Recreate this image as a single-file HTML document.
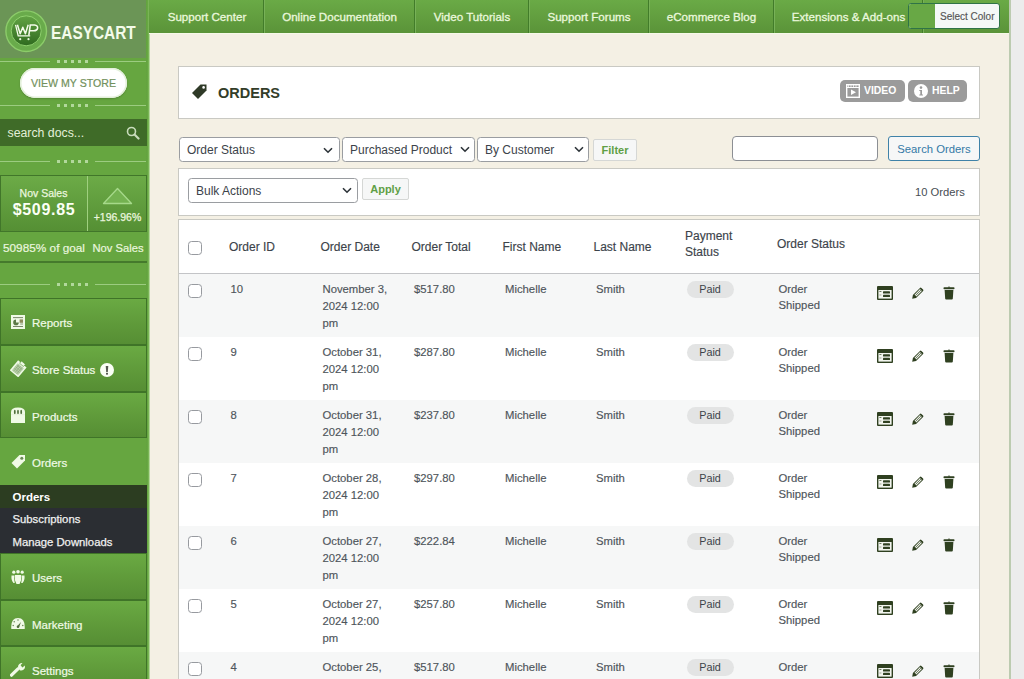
<!DOCTYPE html>
<html><head><meta charset="utf-8">
<style>
*{box-sizing:border-box;margin:0;padding:0}
html,body{width:1024px;height:679px;overflow:hidden}
body{position:relative;background:#f4f0e4;font-family:"Liberation Sans",sans-serif;color:#2c3338}
.a{position:absolute;white-space:nowrap}
/* sidebar */
#sb{position:absolute;left:0;top:0;width:146px;height:679px;background:#66a640}
#sbedge{position:absolute;left:146px;top:0;width:4px;height:679px;background:linear-gradient(90deg,#62a23e,#68a843 45%,#86be63 75%,#e2f3d3)}
#logo{position:absolute;left:0;top:0;width:146px;height:58px;background:#6b9556}
.div{position:absolute;left:0;width:146px;height:8px}
.div .l{position:absolute;top:3px;height:1.2px;background:#9ccc80}
.div .d{position:absolute;top:2px;width:3.2px;height:3.2px;background:#b2d89c}
.menu{position:absolute;left:0;width:147px;height:47px;background:linear-gradient(#6aaa43,#5f9a3a 55%,#568e34);border:1px solid #3f7428}
.menu .t{position:absolute;left:31px;top:2px;font-size:11.5px;color:#f0fae6;-webkit-text-stroke:0.2px #f0fae6}
.menu svg{position:absolute}
/* top bar */
#top{position:absolute;left:149px;top:0;width:861px;height:34px;background:linear-gradient(#6aaa46,#5b9439 97%);border-bottom:1px solid #f6f9e8}
.nav{position:absolute;top:0;height:33px;line-height:34px;font-size:11.6px;color:#eaf8dc;-webkit-text-stroke:.3px #eaf8dc;text-align:center}
.sep{position:absolute;top:0;width:2px;height:33px;background:linear-gradient(90deg,#427c2a 50%,#78b158 50%)}
#rstrip{position:absolute;left:1011px;top:0;width:13px;height:679px;background:#ececec}
#rline{position:absolute;left:1009px;top:0;width:2px;height:679px;background:#bccbb0}
.box{position:absolute;background:#fff;border:1px solid #c9c9c3}
.sel{position:absolute;height:25px;background:#fff;border:1px solid #9a9da1;border-radius:3.5px;font-size:12px;line-height:25px;padding-left:7px;color:#3c434a}
.sel svg{position:absolute;top:8px}
.btn{position:absolute;background:#f6f7f7;border:1px solid #d5d7d5;border-radius:2px;font-size:11px;font-weight:bold;color:#5f9f45;text-align:center}
.th{position:absolute;font-size:12px;color:#3c434a;line-height:16px;-webkit-text-stroke:.15px #3c434a}
.row{position:absolute;left:179px;width:800px;height:63px}
.td{position:absolute;font-size:11.3px;color:#4e555b;line-height:16.7px;-webkit-text-stroke:.15px #4e555b}
.cb{position:absolute;width:14px;height:14px;border:1px solid #979a9f;border-radius:3.5px;background:#fff}
.pill{position:absolute;width:47px;height:17px;border-radius:9px;background:#e3e4e4;font-size:10.8px;line-height:17px;text-align:center;color:#3c434a}
</style></head><body>
<div id="sb"></div>
<div id="sbedge"></div>
<div id="logo"></div>
<!-- logo -->
<svg class="a" style="left:4px;top:9px" width="46" height="46" viewBox="0 0 46 46">
  <defs><linearGradient id="lg1" x1="0" y1="0" x2="0" y2="1"><stop offset="0" stop-color="#62a344"/><stop offset="1" stop-color="#2f6a1f"/></linearGradient></defs>
  <circle cx="22.2" cy="22.2" r="20.3" fill="#69ab4b" stroke="#8ccc6a" stroke-width="1.4"/>
  <circle cx="22.2" cy="21.8" r="15" fill="url(#lg1)" stroke="#8fd06e" stroke-width="1"/>
  <path d="M11.6 15.8 L14.2 26.8 L26.2 26.8" stroke="#f4fbea" stroke-width="1.3" fill="none"/>
  <path d="M13.4 15.8 L16.2 24.8 L18.8 18.2 L21.4 24.8 L24.2 15.8" stroke="#f4fbea" stroke-width="1.5" fill="none" stroke-linejoin="round"/>
  <path d="M24.8 26.5 L26.3 16 L30.5 16 Q34 16.5 33.6 19 Q33.2 21.8 29.5 21.8 L25.8 21.8" stroke="#f4fbea" stroke-width="1.6" fill="none"/>
  <circle cx="16.2" cy="30.2" r="1.1" fill="#e8f5dc"/><circle cx="24.5" cy="30.2" r="1.1" fill="#e8f5dc"/>
</svg>
<div class="a" style="left:50.5px;top:22.5px;font-size:17.5px;font-weight:bold;color:#f4fbea;line-height:20px;transform:scaleX(0.88);transform-origin:0 0">EASYCART</div>

<div class="div" style="top:58px"><div class="l" style="left:0;width:50px"></div><div class="l" style="left:95px;width:51px"></div><div class="d" style="left:57px"></div><div class="d" style="left:64px"></div><div class="d" style="left:71px"></div><div class="d" style="left:78px"></div><div class="d" style="left:85px"></div></div>
<div class="div" style="top:102px"><div class="l" style="left:0;width:50px"></div><div class="l" style="left:95px;width:51px"></div><div class="d" style="left:57px"></div><div class="d" style="left:64px"></div><div class="d" style="left:71px"></div><div class="d" style="left:78px"></div><div class="d" style="left:85px"></div></div>
<div class="div" style="top:158px"><div class="l" style="left:0;width:50px"></div><div class="l" style="left:95px;width:51px"></div><div class="d" style="left:57px"></div><div class="d" style="left:64px"></div><div class="d" style="left:71px"></div><div class="d" style="left:78px"></div><div class="d" style="left:85px"></div></div>
<div class="div" style="top:281px"><div class="l" style="left:0;width:50px"></div><div class="l" style="left:95px;width:51px"></div><div class="d" style="left:57px"></div><div class="d" style="left:64px"></div><div class="d" style="left:71px"></div><div class="d" style="left:78px"></div><div class="d" style="left:85px"></div></div>
<div class="a" style="left:20px;top:68px;width:107px;height:30px;border-radius:15px;background:#fff;box-shadow:0 1px 2px rgba(0,0,0,.2), inset 0 0 0 1.5px #e3f0da;font-size:10.6px;line-height:31px;text-align:center;color:#72915c;-webkit-text-stroke:.2px #72915c">VIEW MY STORE</div>
<div class="a" style="left:0;top:119px;width:147px;height:27px;background:#3f6b28"></div>
<div class="a" style="left:7.5px;top:120px;line-height:27px;font-size:12.3px;color:#e3efd8">search docs...</div>
<svg class="a" style="left:126px;top:126px" width="14" height="14" viewBox="0 0 14 14"><circle cx="5.5" cy="5.5" r="4" stroke="#c9dcbc" stroke-width="1.6" fill="none"/><path d="M8.5 8.5 L12.5 12.5" stroke="#c9dcbc" stroke-width="2.2" stroke-linecap="round"/></svg>
<!-- sales box -->
<div class="a" style="left:0;top:175px;width:147px;height:57px;background:linear-gradient(#6cab47,#558f34);border:1px solid #41762a"></div>
<div class="a" style="left:87px;top:176px;width:1px;height:55px;background:#9fd07f"></div>
<div class="a" style="left:0;top:186px;width:87px;text-align:center;font-size:10.5px;line-height:14px;color:#eaf6df;-webkit-text-stroke:.25px #eaf6df">Nov Sales</div>
<div class="a" style="left:0.5px;top:200px;width:87px;text-align:center;font-size:16px;font-weight:bold;line-height:20px;letter-spacing:0.7px;color:#fbfff5">$509.85</div>
<svg class="a" style="left:102px;top:187px" width="31" height="18" viewBox="0 0 31 18"><path d="M15.5 1.5 L29.5 16.5 L1.5 16.5 Z" fill="#74b251" stroke="#a6d98a" stroke-width="1.3" stroke-linejoin="round"/></svg>
<div class="a" style="left:88px;top:210px;width:59px;text-align:center;font-size:10.5px;line-height:14px;color:#eaf6df;-webkit-text-stroke:.25px #eaf6df">+196.96%</div>
<div class="a" style="left:3px;top:240.5px;font-size:11.8px;line-height:14px;color:#eaf6df;-webkit-text-stroke:.2px #eaf6df">50985% of goal</div>
<div class="a" style="left:92.5px;top:240.5px;font-size:11.2px;line-height:14px;color:#eaf6df;-webkit-text-stroke:.2px #eaf6df">Nov Sales</div>
<div class="a" style="left:0;top:261px;width:147px;height:2px;background:#457a2c"></div>

<div class="menu" style="top:298px;height:47px"><div class="t" style="line-height:45px">Reports</div></div>
<svg class="a" style="left:11px;top:315px" width="14" height="14" viewBox="0 0 14 14"><rect x="0" y="0" width="14" height="14" fill="#f0fae6"/><rect x="2" y="2.2" width="10" height=".9" fill="#6b7a5a"/><path d="M5 7.4 L5 4.6 A2.8 2.8 0 1 0 7.8 7.4 Z" fill="#5b7a45"/><rect x="8.6" y="4.4" width="3.4" height="3.4" fill="#8d8a5a"/><rect x="9.2" y="8.6" width="2.8" height=".8" fill="#6b7a5a"/><rect x="2" y="11" width="10" height=".9" fill="#6b7a5a"/></svg>
<div class="menu" style="top:345px;height:47px"><div class="t" style="line-height:45px">Store Status</div></div>
<svg class="a" style="left:10px;top:360px" width="17" height="17" viewBox="0 0 17 17"><g transform="rotate(40 8.5 8.5)"><rect x="3" y="2.5" width="11" height="13" fill="#f0fae6"/><rect x="4.5" y="5" width="8" height="9" fill="#b8cfa8"/><path d="M5 7h7M5 9h7M5 11h7M6.5 5v9M8.5 5v9M10.5 5v9" stroke="#8aa878" stroke-width=".6"/><rect x="6" y="0.8" width="5" height="3" fill="#f0fae6" stroke="#5a9538" stroke-width=".6"/></g></svg>
<svg class="a" style="left:100px;top:363px" width="14" height="14" viewBox="0 0 14 14"><circle cx="7" cy="7" r="7" fill="#fafff5"/><path d="M5.7 3 H8.3 L7.8 9 H6.2 Z" fill="#55594f"/><rect x="6" y="9.8" width="2" height="1.8" fill="#55594f"/></svg>
<div class="menu" style="top:392px;height:46px"><div class="t" style="line-height:44px">Products</div></div>
<svg class="a" style="left:11px;top:407px" width="14" height="16" viewBox="0 0 14 16"><path d="M0 16 V5 Q0 0.5 7 0.5 Q14 0.5 14 5 V16 Z" fill="#f0fae6"/><ellipse cx="3.8" cy="5" rx=".9" ry="2.2" fill="#4f6e3a"/><ellipse cx="7" cy="5" rx=".9" ry="2.2" fill="#4f6e3a"/><ellipse cx="10.2" cy="5" rx=".9" ry="2.2" fill="#4f6e3a"/><rect x="0" y="7.5" width="14" height=".6" fill="#dfead5"/></svg>
<div class="a" style="left:32px;top:455px;line-height:16px;font-size:11.5px;color:#f0fae6;-webkit-text-stroke:.2px #f0fae6">Orders</div>
<svg class="a" style="left:10px;top:454px" width="16" height="16" viewBox="0 0 16 16"><path d="M9.5 1 H15 V6.5 L7 14.5 L1.5 9 Z" fill="#f0fae6"/><circle cx="11.8" cy="4.2" r="1.5" fill="#6a8a55"/></svg>
<div class="a" style="left:0;top:485px;width:147px;height:68px;background:#2b2e33"></div>
<div class="a" style="left:0;top:485px;width:147px;height:23px;background:#2c3d21"></div>
<div class="a" style="left:12.5px;top:489px;line-height:16px;font-size:11.5px;font-weight:bold;color:#fff">Orders</div>
<div class="a" style="left:12.5px;top:511px;line-height:16px;font-size:11.3px;color:#f0f0f0;-webkit-text-stroke:.25px #f0f0f0">Subscriptions</div>
<div class="a" style="left:12.5px;top:534px;line-height:16px;font-size:11.3px;color:#f0f0f0;-webkit-text-stroke:.25px #f0f0f0">Manage Downloads</div>
<div class="menu" style="top:553px;height:47px"><div class="t" style="line-height:45px">Users</div></div>
<svg class="a" style="left:11px;top:570px" width="14" height="14" viewBox="0 0 14 14"><circle cx="2.8" cy="2.2" r="1.6" fill="#f0fae6"/><circle cx="7" cy="1.8" r="1.8" fill="#f0fae6"/><circle cx="11.2" cy="2.2" r="1.6" fill="#f0fae6"/><path d="M0.5 5.5 Q0 10 2.5 13 L3.8 13 Q2.6 9 3.5 5.5Z M13.5 5.5 Q14 10 11.5 13 L10.2 13 Q11.4 9 10.5 5.5Z" fill="#f0fae6"/><path d="M4 5 H10 Q11 9.5 8.5 14 H5.5 Q3 9.5 4 5Z" fill="#f0fae6"/></svg>
<div class="menu" style="top:600px;height:46px"><div class="t" style="line-height:44px;top:1.5px">Marketing</div></div>
<svg class="a" style="left:11px;top:617px" width="14" height="13" viewBox="0 0 14 13"><path d="M0.3 12 Q-0.5 1 7 1 Q14.5 1 13.7 12 Z" fill="#f0fae6"/><circle cx="7" cy="3" r=".7" fill="#5e7c48"/><circle cx="3.2" cy="4.7" r=".7" fill="#5e7c48"/><circle cx="2.2" cy="8.5" r=".7" fill="#5e7c48"/><circle cx="11.8" cy="8.5" r=".7" fill="#5e7c48"/><path d="M6 9.5 L10 5 L8 10.2 Z" fill="#4e6a3a"/><circle cx="7" cy="9.7" r="1.3" fill="#4e6a3a"/></svg>
<div class="menu" style="top:646px;height:47px"><div class="t" style="line-height:45px">Settings</div></div>
<svg class="a" style="left:10px;top:662px" width="16" height="16" viewBox="0 0 16 16"><path d="M1.5 13.2 L8.2 6.6" stroke="#f0fae6" stroke-width="3.2" stroke-linecap="round"/><path d="M8 5 A4 4 0 0 1 12.5 1 L10.6 3.3 L12.4 5.4 L14.9 3.5 A4 4 0 0 1 9.8 8.3 Z" fill="#f0fae6"/></svg>
<div id="top"></div>
<div class="nav" style="left:150px;width:114px">Support Center</div>
<div class="sep" style="left:263px"></div><div class="nav" style="left:264px;width:151px">Online Documentation</div>
<div class="sep" style="left:414px"></div><div class="nav" style="left:415px;width:114px">Video Tutorials</div>
<div class="sep" style="left:528px"></div><div class="nav" style="left:529px;width:120px">Support Forums</div>
<div class="sep" style="left:648px"></div><div class="nav" style="left:649px;width:125px">eCommerce Blog</div>
<div class="sep" style="left:773px"></div><div class="nav" style="left:774px;width:149px">Extensions &amp; Add-ons</div>
<div class="sep" style="left:922px"></div>
<div class="a" style="left:908px;top:3px;width:92px;height:26px;border:1px solid #2f7447;border-radius:3px;background:#f4f8f7;overflow:hidden"><div style="position:absolute;left:0;top:0;width:26px;height:26px;background:#68a845"></div><div style="position:absolute;left:31px;top:1px;line-height:23px;font-size:10px;color:#555;-webkit-text-stroke:.15px #555">Select Color</div></div>
<div id="rline"></div><div id="rstrip"></div>
<div class="box" style="left:178px;top:66px;width:802px;height:53px"></div>
<svg class="a" style="left:192px;top:84px" width="15" height="15" viewBox="0 0 15 15"><path d="M8.5 0.5 H14.5 V6.5 L6 15 L0 9 Z" fill="#2f3a27"/><circle cx="11.6" cy="3.4" r="1.3" fill="#fff"/></svg>
<div class="a" style="left:218px;top:84px;font-size:14.5px;font-weight:bold;line-height:18px;color:#333d29">ORDERS</div>
<div class="a" style="left:840px;top:80px;width:65px;height:22px;border-radius:5px;background:#9b9b9b"></div>
<svg class="a" style="left:846px;top:84px" width="14" height="14" viewBox="0 0 14 14"><rect x="0.7" y="0.7" width="12.6" height="12.6" fill="none" stroke="#fff" stroke-width="1.4"/><path d="M1 3.5 H13" stroke="#fff" stroke-width="1"/><path d="M2.5 1v2M5 1v2M7.5 1v2M10 1v2" stroke="#fff" stroke-width=".7"/><path d="M5 5.5 L10 8.3 L5 11 Z" fill="#fff"/></svg>
<div class="a" style="left:864px;top:84px;font-size:10.4px;font-weight:bold;line-height:14px;color:#fff">VIDEO</div>
<div class="a" style="left:908px;top:80px;width:59px;height:22px;border-radius:5px;background:#9b9b9b"></div>
<svg class="a" style="left:914px;top:84px" width="14" height="14" viewBox="0 0 14 14"><circle cx="7" cy="7" r="7" fill="#fff"/><circle cx="7" cy="3.6" r="1.3" fill="#9b9b9b"/><path d="M5.3 6 H8 V10.5 H9 V11.6 H5.3 V10.5 H6.3 V7.1 H5.3 Z" fill="#9b9b9b"/></svg>
<div class="a" style="left:932px;top:84px;font-size:10.4px;font-weight:bold;line-height:14px;color:#fff">HELP</div>
<div class="sel" style="left:179px;top:137px;width:161px">Order Status<svg style="position:absolute;left:143px;top:8.5px" width="10" height="7" viewBox="0 0 10 7"><path d="M1 1.2 L5 5.2 L9 1.2" stroke="#2c3338" stroke-width="1.6" fill="none"/></svg></div>
<div class="sel" style="left:342px;top:137px;width:133px">Purchased Product<svg style="position:absolute;left:117px;top:8px" width="10" height="7" viewBox="0 0 10 7"><path d="M1 1.2 L5 5.2 L9 1.2" stroke="#2c3338" stroke-width="1.6" fill="none"/></svg></div>
<div class="sel" style="left:477px;top:137px;width:112px">By Customer<svg style="position:absolute;left:96px;top:8px" width="10" height="7" viewBox="0 0 10 7"><path d="M1 1.2 L5 5.2 L9 1.2" stroke="#2c3338" stroke-width="1.6" fill="none"/></svg></div>
<div class="btn" style="left:593px;top:139px;width:44px;height:22px;line-height:20px">Filter</div>
<div class="a" style="left:732px;top:136px;width:146px;height:25px;border:1px solid #8c8f94;border-radius:4px;background:#fff"></div>
<div class="a" style="left:888px;top:136px;width:92px;height:25px;border:1px solid #3f82a8;border-radius:3px;background:#f6f7f7;font-size:11.3px;line-height:25px;text-align:center;color:#3479a6">Search Orders</div>
<div class="box" style="left:178px;top:168px;width:802px;height:48px"></div>
<div class="sel" style="left:188px;top:177.5px;width:170px">Bulk Actions<svg style="position:absolute;left:153px;top:8px" width="10" height="7" viewBox="0 0 10 7"><path d="M1 1.2 L5 5.2 L9 1.2" stroke="#2c3338" stroke-width="1.6" fill="none"/></svg></div>
<div class="btn" style="left:362px;top:178px;width:47px;height:22px;line-height:20px">Apply</div>
<div class="a" style="left:915px;top:184.5px;font-size:11.2px;line-height:14px;color:#474d53">10 Orders</div>
<div class="box" style="left:178px;top:219px;width:802px;height:470px"></div>
<div class="a" style="left:179px;top:273px;width:800px;height:1px;background:#c3c4c7"></div>
<div class="cb" style="left:188px;top:241px"></div>
<div class="th" style="left:229px;top:239px">Order ID</div>
<div class="th" style="left:320.5px;top:239px">Order Date</div>
<div class="th" style="left:411.5px;top:239px">Order Total</div>
<div class="th" style="left:502.5px;top:239px">First Name</div>
<div class="th" style="left:593.5px;top:239px">Last Name</div>
<div class="th" style="left:685px;top:227.5px">Payment<br>Status</div>
<div class="th" style="left:777px;top:235.5px">Order Status</div>
<div class="row" style="top:273.60px;background:#f6f7f7">
<div class="cb" style="left:9px;top:10px"></div>
<div class="td" style="left:51.5px;top:7.5px">10</div>
<div class="td" style="left:143.5px;top:7.5px">November 3,<br>2024 12:00<br>pm</div>
<div class="td" style="left:235px;top:7.5px">$517.80</div>
<div class="td" style="left:326px;top:7.5px">Michelle</div>
<div class="td" style="left:417px;top:7.5px">Smith</div>
<div class="pill" style="left:507.5px;top:7px">Paid</div>
<div class="td" style="left:599.5px;top:7.5px;line-height:16.3px">Order<br>Shipped</div>
<svg style="position:absolute;left:698px;top:12.5px" width="16" height="14" viewBox="0 0 16 14"><rect x="0" y="0" width="16" height="14" rx="1" fill="#2f4020"/><rect x="1.4" y="4" width="13.2" height="8.6" fill="#f2f5ee"/><rect x="6" y="5.3" width="7" height="2.3" rx=".6" fill="#2f4020"/><rect x="6" y="8.8" width="7" height="2.3" rx=".6" fill="#2f4020"/><rect x="2.4" y="5.2" width="2" height=".8" fill="#4a5a3a"/><rect x="2.4" y="8.6" width="2" height=".8" fill="#8a9480"/></svg>
<svg style="position:absolute;left:732px;top:13px" width="13" height="13" viewBox="0 0 13 13"><g transform="rotate(-45 6.5 6.5)"><path d="M-1 6.5 L2.2 4.3 H12.2 Q13.2 4.3 13.2 5.3 V7.7 Q13.2 8.7 12.2 8.7 H2.2 Z" fill="#2f4020"/><rect x="3.6" y="5.2" width="7.8" height="2.6" fill="#e9ede4"/><path d="M3.6 6.5 H11.4" stroke="#2f4020" stroke-width=".6"/></g></svg>
<svg style="position:absolute;left:764px;top:12.5px" width="12" height="14" viewBox="0 0 12 14"><path d="M4.6 1.4 Q6 -.4 7.4 1.4 Z" fill="#2f4020"/><rect x=".5" y="1.3" width="11" height="2" rx=".8" fill="#2f4020"/><path d="M1.6 4 H10.4 L9.8 12.8 Q9.7 13.6 8.9 13.6 H3.1 Q2.3 13.6 2.2 12.8 Z" fill="#2f4020"/></svg>
</div>
<div class="row" style="top:336.60px;background:#fff">
<div class="cb" style="left:9px;top:10px"></div>
<div class="td" style="left:51.5px;top:7.5px">9</div>
<div class="td" style="left:143.5px;top:7.5px">October 31,<br>2024 12:00<br>pm</div>
<div class="td" style="left:235px;top:7.5px">$287.80</div>
<div class="td" style="left:326px;top:7.5px">Michelle</div>
<div class="td" style="left:417px;top:7.5px">Smith</div>
<div class="pill" style="left:507.5px;top:7px">Paid</div>
<div class="td" style="left:599.5px;top:7.5px;line-height:16.3px">Order<br>Shipped</div>
<svg style="position:absolute;left:698px;top:12.5px" width="16" height="14" viewBox="0 0 16 14"><rect x="0" y="0" width="16" height="14" rx="1" fill="#2f4020"/><rect x="1.4" y="4" width="13.2" height="8.6" fill="#f2f5ee"/><rect x="6" y="5.3" width="7" height="2.3" rx=".6" fill="#2f4020"/><rect x="6" y="8.8" width="7" height="2.3" rx=".6" fill="#2f4020"/><rect x="2.4" y="5.2" width="2" height=".8" fill="#4a5a3a"/><rect x="2.4" y="8.6" width="2" height=".8" fill="#8a9480"/></svg>
<svg style="position:absolute;left:732px;top:13px" width="13" height="13" viewBox="0 0 13 13"><g transform="rotate(-45 6.5 6.5)"><path d="M-1 6.5 L2.2 4.3 H12.2 Q13.2 4.3 13.2 5.3 V7.7 Q13.2 8.7 12.2 8.7 H2.2 Z" fill="#2f4020"/><rect x="3.6" y="5.2" width="7.8" height="2.6" fill="#e9ede4"/><path d="M3.6 6.5 H11.4" stroke="#2f4020" stroke-width=".6"/></g></svg>
<svg style="position:absolute;left:764px;top:12.5px" width="12" height="14" viewBox="0 0 12 14"><path d="M4.6 1.4 Q6 -.4 7.4 1.4 Z" fill="#2f4020"/><rect x=".5" y="1.3" width="11" height="2" rx=".8" fill="#2f4020"/><path d="M1.6 4 H10.4 L9.8 12.8 Q9.7 13.6 8.9 13.6 H3.1 Q2.3 13.6 2.2 12.8 Z" fill="#2f4020"/></svg>
</div>
<div class="row" style="top:399.60px;background:#f6f7f7">
<div class="cb" style="left:9px;top:10px"></div>
<div class="td" style="left:51.5px;top:7.5px">8</div>
<div class="td" style="left:143.5px;top:7.5px">October 31,<br>2024 12:00<br>pm</div>
<div class="td" style="left:235px;top:7.5px">$237.80</div>
<div class="td" style="left:326px;top:7.5px">Michelle</div>
<div class="td" style="left:417px;top:7.5px">Smith</div>
<div class="pill" style="left:507.5px;top:7px">Paid</div>
<div class="td" style="left:599.5px;top:7.5px;line-height:16.3px">Order<br>Shipped</div>
<svg style="position:absolute;left:698px;top:12.5px" width="16" height="14" viewBox="0 0 16 14"><rect x="0" y="0" width="16" height="14" rx="1" fill="#2f4020"/><rect x="1.4" y="4" width="13.2" height="8.6" fill="#f2f5ee"/><rect x="6" y="5.3" width="7" height="2.3" rx=".6" fill="#2f4020"/><rect x="6" y="8.8" width="7" height="2.3" rx=".6" fill="#2f4020"/><rect x="2.4" y="5.2" width="2" height=".8" fill="#4a5a3a"/><rect x="2.4" y="8.6" width="2" height=".8" fill="#8a9480"/></svg>
<svg style="position:absolute;left:732px;top:13px" width="13" height="13" viewBox="0 0 13 13"><g transform="rotate(-45 6.5 6.5)"><path d="M-1 6.5 L2.2 4.3 H12.2 Q13.2 4.3 13.2 5.3 V7.7 Q13.2 8.7 12.2 8.7 H2.2 Z" fill="#2f4020"/><rect x="3.6" y="5.2" width="7.8" height="2.6" fill="#e9ede4"/><path d="M3.6 6.5 H11.4" stroke="#2f4020" stroke-width=".6"/></g></svg>
<svg style="position:absolute;left:764px;top:12.5px" width="12" height="14" viewBox="0 0 12 14"><path d="M4.6 1.4 Q6 -.4 7.4 1.4 Z" fill="#2f4020"/><rect x=".5" y="1.3" width="11" height="2" rx=".8" fill="#2f4020"/><path d="M1.6 4 H10.4 L9.8 12.8 Q9.7 13.6 8.9 13.6 H3.1 Q2.3 13.6 2.2 12.8 Z" fill="#2f4020"/></svg>
</div>
<div class="row" style="top:462.60px;background:#fff">
<div class="cb" style="left:9px;top:10px"></div>
<div class="td" style="left:51.5px;top:7.5px">7</div>
<div class="td" style="left:143.5px;top:7.5px">October 28,<br>2024 12:00<br>pm</div>
<div class="td" style="left:235px;top:7.5px">$297.80</div>
<div class="td" style="left:326px;top:7.5px">Michelle</div>
<div class="td" style="left:417px;top:7.5px">Smith</div>
<div class="pill" style="left:507.5px;top:7px">Paid</div>
<div class="td" style="left:599.5px;top:7.5px;line-height:16.3px">Order<br>Shipped</div>
<svg style="position:absolute;left:698px;top:12.5px" width="16" height="14" viewBox="0 0 16 14"><rect x="0" y="0" width="16" height="14" rx="1" fill="#2f4020"/><rect x="1.4" y="4" width="13.2" height="8.6" fill="#f2f5ee"/><rect x="6" y="5.3" width="7" height="2.3" rx=".6" fill="#2f4020"/><rect x="6" y="8.8" width="7" height="2.3" rx=".6" fill="#2f4020"/><rect x="2.4" y="5.2" width="2" height=".8" fill="#4a5a3a"/><rect x="2.4" y="8.6" width="2" height=".8" fill="#8a9480"/></svg>
<svg style="position:absolute;left:732px;top:13px" width="13" height="13" viewBox="0 0 13 13"><g transform="rotate(-45 6.5 6.5)"><path d="M-1 6.5 L2.2 4.3 H12.2 Q13.2 4.3 13.2 5.3 V7.7 Q13.2 8.7 12.2 8.7 H2.2 Z" fill="#2f4020"/><rect x="3.6" y="5.2" width="7.8" height="2.6" fill="#e9ede4"/><path d="M3.6 6.5 H11.4" stroke="#2f4020" stroke-width=".6"/></g></svg>
<svg style="position:absolute;left:764px;top:12.5px" width="12" height="14" viewBox="0 0 12 14"><path d="M4.6 1.4 Q6 -.4 7.4 1.4 Z" fill="#2f4020"/><rect x=".5" y="1.3" width="11" height="2" rx=".8" fill="#2f4020"/><path d="M1.6 4 H10.4 L9.8 12.8 Q9.7 13.6 8.9 13.6 H3.1 Q2.3 13.6 2.2 12.8 Z" fill="#2f4020"/></svg>
</div>
<div class="row" style="top:525.60px;background:#f6f7f7">
<div class="cb" style="left:9px;top:10px"></div>
<div class="td" style="left:51.5px;top:7.5px">6</div>
<div class="td" style="left:143.5px;top:7.5px">October 27,<br>2024 12:00<br>pm</div>
<div class="td" style="left:235px;top:7.5px">$222.84</div>
<div class="td" style="left:326px;top:7.5px">Michelle</div>
<div class="td" style="left:417px;top:7.5px">Smith</div>
<div class="pill" style="left:507.5px;top:7px">Paid</div>
<div class="td" style="left:599.5px;top:7.5px;line-height:16.3px">Order<br>Shipped</div>
<svg style="position:absolute;left:698px;top:12.5px" width="16" height="14" viewBox="0 0 16 14"><rect x="0" y="0" width="16" height="14" rx="1" fill="#2f4020"/><rect x="1.4" y="4" width="13.2" height="8.6" fill="#f2f5ee"/><rect x="6" y="5.3" width="7" height="2.3" rx=".6" fill="#2f4020"/><rect x="6" y="8.8" width="7" height="2.3" rx=".6" fill="#2f4020"/><rect x="2.4" y="5.2" width="2" height=".8" fill="#4a5a3a"/><rect x="2.4" y="8.6" width="2" height=".8" fill="#8a9480"/></svg>
<svg style="position:absolute;left:732px;top:13px" width="13" height="13" viewBox="0 0 13 13"><g transform="rotate(-45 6.5 6.5)"><path d="M-1 6.5 L2.2 4.3 H12.2 Q13.2 4.3 13.2 5.3 V7.7 Q13.2 8.7 12.2 8.7 H2.2 Z" fill="#2f4020"/><rect x="3.6" y="5.2" width="7.8" height="2.6" fill="#e9ede4"/><path d="M3.6 6.5 H11.4" stroke="#2f4020" stroke-width=".6"/></g></svg>
<svg style="position:absolute;left:764px;top:12.5px" width="12" height="14" viewBox="0 0 12 14"><path d="M4.6 1.4 Q6 -.4 7.4 1.4 Z" fill="#2f4020"/><rect x=".5" y="1.3" width="11" height="2" rx=".8" fill="#2f4020"/><path d="M1.6 4 H10.4 L9.8 12.8 Q9.7 13.6 8.9 13.6 H3.1 Q2.3 13.6 2.2 12.8 Z" fill="#2f4020"/></svg>
</div>
<div class="row" style="top:588.60px;background:#fff">
<div class="cb" style="left:9px;top:10px"></div>
<div class="td" style="left:51.5px;top:7.5px">5</div>
<div class="td" style="left:143.5px;top:7.5px">October 27,<br>2024 12:00<br>pm</div>
<div class="td" style="left:235px;top:7.5px">$257.80</div>
<div class="td" style="left:326px;top:7.5px">Michelle</div>
<div class="td" style="left:417px;top:7.5px">Smith</div>
<div class="pill" style="left:507.5px;top:7px">Paid</div>
<div class="td" style="left:599.5px;top:7.5px;line-height:16.3px">Order<br>Shipped</div>
<svg style="position:absolute;left:698px;top:12.5px" width="16" height="14" viewBox="0 0 16 14"><rect x="0" y="0" width="16" height="14" rx="1" fill="#2f4020"/><rect x="1.4" y="4" width="13.2" height="8.6" fill="#f2f5ee"/><rect x="6" y="5.3" width="7" height="2.3" rx=".6" fill="#2f4020"/><rect x="6" y="8.8" width="7" height="2.3" rx=".6" fill="#2f4020"/><rect x="2.4" y="5.2" width="2" height=".8" fill="#4a5a3a"/><rect x="2.4" y="8.6" width="2" height=".8" fill="#8a9480"/></svg>
<svg style="position:absolute;left:732px;top:13px" width="13" height="13" viewBox="0 0 13 13"><g transform="rotate(-45 6.5 6.5)"><path d="M-1 6.5 L2.2 4.3 H12.2 Q13.2 4.3 13.2 5.3 V7.7 Q13.2 8.7 12.2 8.7 H2.2 Z" fill="#2f4020"/><rect x="3.6" y="5.2" width="7.8" height="2.6" fill="#e9ede4"/><path d="M3.6 6.5 H11.4" stroke="#2f4020" stroke-width=".6"/></g></svg>
<svg style="position:absolute;left:764px;top:12.5px" width="12" height="14" viewBox="0 0 12 14"><path d="M4.6 1.4 Q6 -.4 7.4 1.4 Z" fill="#2f4020"/><rect x=".5" y="1.3" width="11" height="2" rx=".8" fill="#2f4020"/><path d="M1.6 4 H10.4 L9.8 12.8 Q9.7 13.6 8.9 13.6 H3.1 Q2.3 13.6 2.2 12.8 Z" fill="#2f4020"/></svg>
</div>
<div class="row" style="top:651.60px;background:#f6f7f7">
<div class="cb" style="left:9px;top:10px"></div>
<div class="td" style="left:51.5px;top:7.5px">4</div>
<div class="td" style="left:143.5px;top:7.5px">October 25,<br>2024 12:00<br>pm</div>
<div class="td" style="left:235px;top:7.5px">$517.80</div>
<div class="td" style="left:326px;top:7.5px">Michelle</div>
<div class="td" style="left:417px;top:7.5px">Smith</div>
<div class="pill" style="left:507.5px;top:7px">Paid</div>
<div class="td" style="left:599.5px;top:7.5px;line-height:16.3px">Order<br>Shipped</div>
<svg style="position:absolute;left:698px;top:12.5px" width="16" height="14" viewBox="0 0 16 14"><rect x="0" y="0" width="16" height="14" rx="1" fill="#2f4020"/><rect x="1.4" y="4" width="13.2" height="8.6" fill="#f2f5ee"/><rect x="6" y="5.3" width="7" height="2.3" rx=".6" fill="#2f4020"/><rect x="6" y="8.8" width="7" height="2.3" rx=".6" fill="#2f4020"/><rect x="2.4" y="5.2" width="2" height=".8" fill="#4a5a3a"/><rect x="2.4" y="8.6" width="2" height=".8" fill="#8a9480"/></svg>
<svg style="position:absolute;left:732px;top:13px" width="13" height="13" viewBox="0 0 13 13"><g transform="rotate(-45 6.5 6.5)"><path d="M-1 6.5 L2.2 4.3 H12.2 Q13.2 4.3 13.2 5.3 V7.7 Q13.2 8.7 12.2 8.7 H2.2 Z" fill="#2f4020"/><rect x="3.6" y="5.2" width="7.8" height="2.6" fill="#e9ede4"/><path d="M3.6 6.5 H11.4" stroke="#2f4020" stroke-width=".6"/></g></svg>
<svg style="position:absolute;left:764px;top:12.5px" width="12" height="14" viewBox="0 0 12 14"><path d="M4.6 1.4 Q6 -.4 7.4 1.4 Z" fill="#2f4020"/><rect x=".5" y="1.3" width="11" height="2" rx=".8" fill="#2f4020"/><path d="M1.6 4 H10.4 L9.8 12.8 Q9.7 13.6 8.9 13.6 H3.1 Q2.3 13.6 2.2 12.8 Z" fill="#2f4020"/></svg>
</div>
</body></html>
